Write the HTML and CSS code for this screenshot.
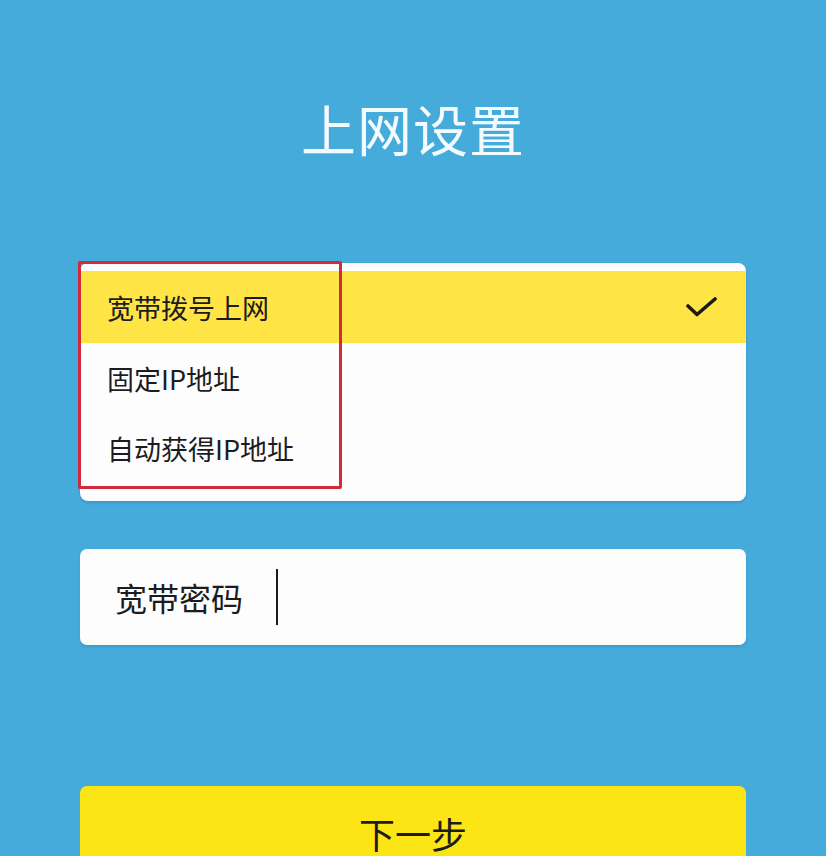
FILE: index.html
```html
<!DOCTYPE html>
<html lang="zh-CN">
<head>
<meta charset="utf-8">
<title>上网设置</title>
<link rel="stylesheet" href="styles.css">
</head>
<body>
<div class="page">
  <h1 class="title">上网设置</h1>

  <div class="select-card">
    <div class="option selected">
      <span class="option-text">宽带拨号上网</span>
      <svg class="check" width="32" height="20" viewBox="0 0 32 20">
        <polyline points="2,9 11,17.5 29,2" fill="none" stroke="#1d1a16" stroke-width="3.6" stroke-linecap="round" stroke-linejoin="round"/>
      </svg>
    </div>
    <div class="option"><span class="option-text">固定IP地址</span></div>
    <div class="option"><span class="option-text">自动获得IP地址</span></div>
    <div class="highlight-box"></div>
  </div>

  <div class="input-card">
    <span class="input-label">宽带密码</span>
    <span class="cursor"></span>
  </div>

  <button class="next-btn">下一步</button>
</div>
</body>
</html>
```

FILE: styles.css
```css
html, body {
  margin: 0;
  padding: 0;
  background: #45abdb;
  height: 100%;
  overflow: hidden;
}

.page {
  padding: 0 80px;
  font-family: "Noto Sans CJK SC", "Noto Sans", sans-serif;
  color: #1c1b1f;
}

.title {
  margin: 0;
  padding-top: 88px;
  text-align: center;
  color: #f4fbff;
  font-size: 55px;
  font-weight: 400;
  line-height: 78px;
  letter-spacing: 1px;
}

.select-card {
  position: relative;
  margin-top: 97px;
  background: #fdfdfe;
  border-radius: 8px;
  padding: 8px 0 18px;
  box-shadow: 0 2px 3px rgba(0, 0, 0, 0.12);
}

.option {
  display: flex;
  align-items: center;
  justify-content: space-between;
  height: 71px;
  padding: 0 28px 0 27px;
  font-size: 27px;
}

.option.selected {
  background: #fee444;
  height: 72px;
}

.option-text {
  line-height: 1;
}

.option + .option {
  height: 70px;
}

.check {
  display: block;
  margin-top: 0;
}

.highlight-box {
  position: absolute;
  left: -2px;
  top: -2px;
  width: 258px;
  height: 222px;
  border: 3px solid #d2293c;
  border-radius: 2px;
  pointer-events: none;
}

.input-card {
  display: flex;
  align-items: center;
  margin-top: 48px;
  height: 96px;
  background: #fdfdfe;
  border-radius: 7px;
  padding-left: 35px;
  box-sizing: border-box;
  box-shadow: 0 2px 3px rgba(0, 0, 0, 0.1);
}

.input-label {
  font-size: 32px;
  line-height: 1;
}

.cursor {
  display: block;
  width: 2px;
  height: 56px;
  margin-left: 33px;
  background: #1c1b1f;
}

.next-btn {
  display: block;
  width: 100%;
  margin-top: 141px;
  height: 94px;
  border: none;
  border-radius: 7px;
  background: #fbe514;
  font-family: "Noto Sans CJK SC", "Noto Sans", sans-serif;
  font-size: 36px;
  color: #1c1b1f;
  padding: 0;
  line-height: 1;
}
```
